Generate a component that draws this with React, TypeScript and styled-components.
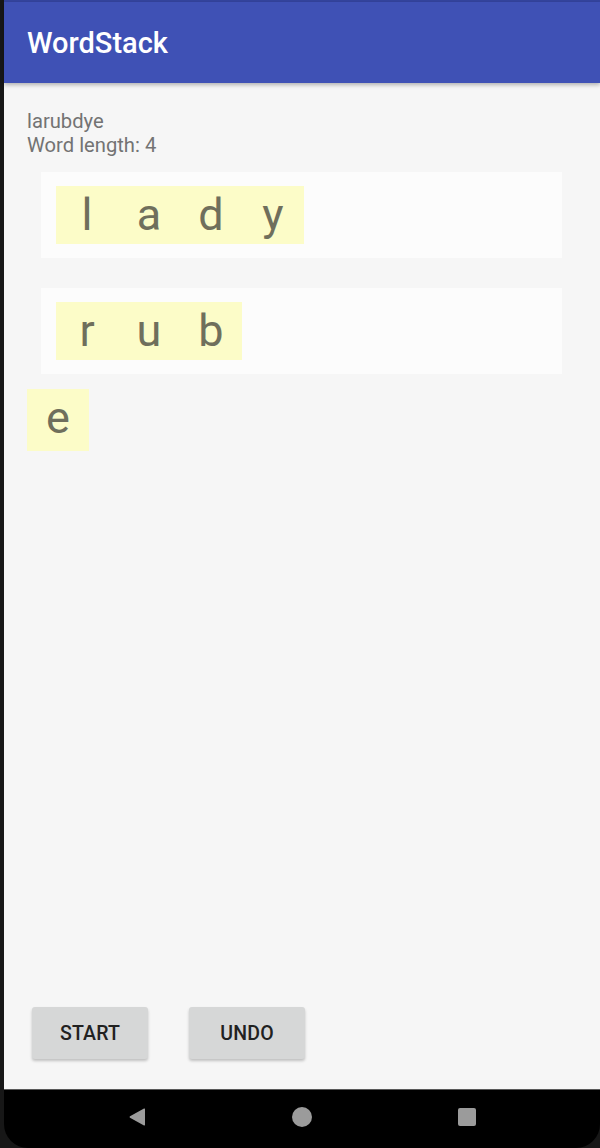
import React from "react";
import styled, { createGlobalStyle } from "styled-components";

const Global = createGlobalStyle`
  html, body { margin: 0; padding: 0; background: #171717; }
  body { font-family: Roboto, "Noto Sans", "Liberation Sans", sans-serif; }
`;

const Device = styled.div`
  width: 600px;
  height: 1148px;
  box-sizing: border-box;
  padding-left: 4px;
  background: #171717;
  display: flex;
  flex-direction: column;
  overflow: hidden;
`;

const Screen = styled.div`
  flex: 1;
  display: flex;
  flex-direction: column;
  background: #f6f6f6;
`;

const StatusStrip = styled.div`
  height: 2px;
  background: #34449e;
`;

const AppBar = styled.header`
  height: 81px;
  background: #3f51b5;
  display: flex;
  align-items: center;
  padding-left: 23px;
  box-shadow: 0 2px 4px rgba(0, 0, 0, 0.28);
  position: relative;
  z-index: 1;
`;

const Title = styled.h1`
  margin: 0;
  color: #ffffff;
  font-family: Roboto, "Liberation Sans", sans-serif;
  font-weight: 500;
  font-size: 29px;
  letter-spacing: 0;
`;

const Content = styled.main`
  flex: 1;
  display: flex;
  flex-direction: column;
  padding: 26px 0 30px 23px;
`;

const Info = styled.p`
  margin: 0;
  color: #737373;
  font-size: 20.2px;
  line-height: 24px;
`;

const StackBox = styled.div<{ $top: number }>`
  margin-top: ${(p) => p.$top}px;
  margin-left: 14px;
  width: 521px;
  height: 86px;
  box-sizing: border-box;
  padding: 14px 15px;
  background: #fcfcfc;
  display: flex;
`;

const TileRow = styled.div`
  display: flex;
  background: #fcfcc8;
  height: 58px;
`;

const Tile = styled.span<{ $tall?: boolean }>`
  width: 62px;
  height: ${(p) => (p.$tall ? 62 : 58)}px;
  background: #fcfcc8;
  color: #6f6f5c;
  font-size: 45px;
  line-height: 58px;
  text-align: center;
  box-sizing: border-box;
`;

const Loose = styled.div`
  margin-top: 15px;
  display: flex;
`;

const Spacer = styled.div`
  flex: 1;
`;

const ButtonRow = styled.div`
  display: flex;
  gap: 41px;
  padding-left: 5px;
`;

const Button = styled.button`
  width: 116px;
  height: 52px;
  border: none;
  border-radius: 3px;
  background: #d6d7d7;
  color: #212121;
  font-family: Roboto, "Liberation Sans", sans-serif;
  font-weight: 500;
  font-size: 19.5px;
  letter-spacing: 0.2px;
  box-shadow: 0 2px 3px rgba(0, 0, 0, 0.22);
  padding: 0;
`;

const NavBar = styled.nav`
  height: 59px;
  background: #000;
  border-top: 1px solid #5a5a5a;
  border-radius: 0 0 24px 24px;
  display: flex;
  align-items: center;
  justify-content: center;
  gap: 146px;
  box-sizing: border-box;
  padding-bottom: 4px;
`;

const Icon = styled.svg`
  display: block;
  fill: #9b9b9b;
`;

export default function App() {
  return (
    <>
      <Global />
      <Device>
        <Screen>
          <StatusStrip />
          <AppBar>
            <Title>WordStack</Title>
          </AppBar>
          <Content>
            <Info>larubdye</Info>
            <Info>Word length: 4</Info>
            <StackBox $top={15}>
              <TileRow>
                {"lady".split("").map((c, i) => (
                  <Tile key={i}>{c}</Tile>
                ))}
              </TileRow>
            </StackBox>
            <StackBox $top={30}>
              <TileRow>
                {"rub".split("").map((c, i) => (
                  <Tile key={i}>{c}</Tile>
                ))}
              </TileRow>
            </StackBox>
            <Loose>
              <Tile $tall>e</Tile>
            </Loose>
            <Spacer />
            <ButtonRow>
              <Button>START</Button>
              <Button>UNDO</Button>
            </ButtonRow>
          </Content>
        </Screen>
        <NavBar>
          <Icon width="17" height="18" viewBox="0 0 17 18">
            <path d="M16 1.2 L16 16.8 Q16 18 15 17.4 L1 9.8 Q0 9 1 8.2 L15 0.6 Q16 0 16 1.2 Z" />
          </Icon>
          <Icon width="20" height="20" viewBox="0 0 20 20">
            <circle cx="10" cy="10" r="10" />
          </Icon>
          <Icon width="18" height="18" viewBox="0 0 18 18">
            <rect x="0" y="0" width="18" height="18" rx="2" />
          </Icon>
        </NavBar>
      </Device>
    </>
  );
}
